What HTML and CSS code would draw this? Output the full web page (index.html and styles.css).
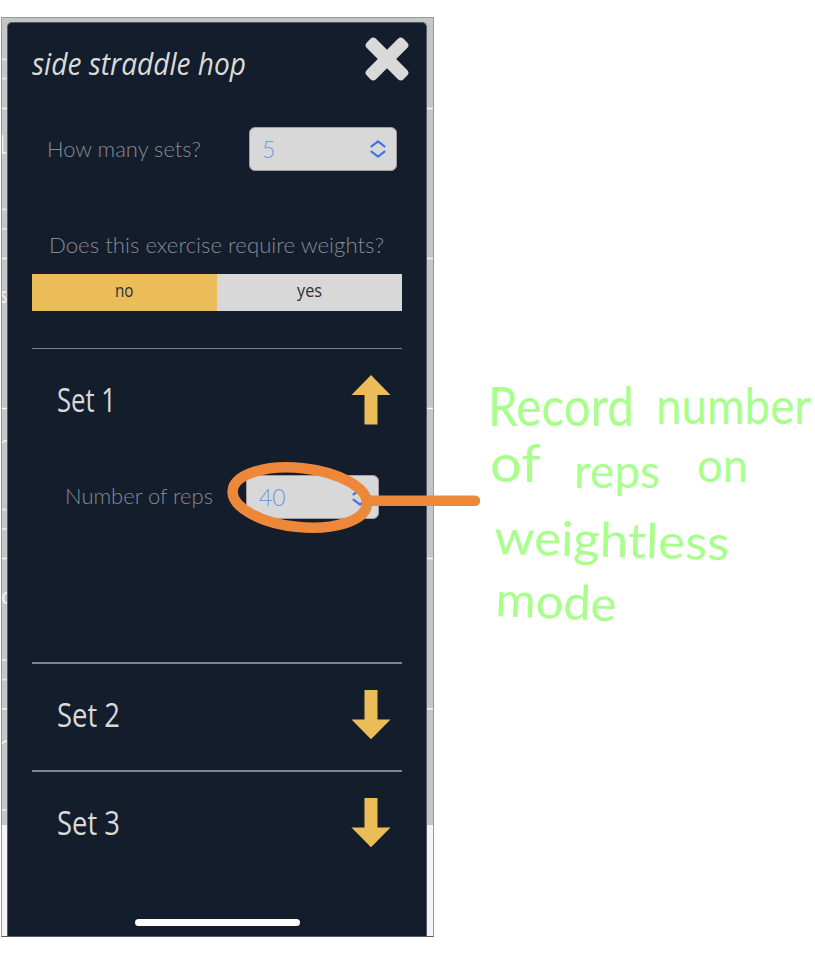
FILE: index.html
```html
<!DOCTYPE html>
<html lang="en">
<head>
<meta charset="utf-8">
<title>side straddle hop</title>
<link rel="stylesheet" href="styles.css">
</head>
<body>
<main class="board">
  <section class="phone">
    <svg class="backdrop" width="433" height="920" viewBox="1 17 433 920" aria-hidden="true">
      <rect x="1" y="825" width="433" height="112" fill="#f4f4f6"/>
      <path class="ticks strong" d="M1 108.5h6M1 258.5h6M1 408.5h6M1 558.5h6M1 709h6M427 108.5h7M427 258.5h7M427 408.5h7M427 558.5h7M427 709h7M2.5 135v18h4M2 443q2-3 5-2M2 744q2-3 5-3"/>
      <path class="ticks" d="M1 59.5h6M1 78.5h6M1 209.5h6M1 229h6M1 509.5h6M1 529h6M1 660h6M1 679.5h6M1 810h6"/>
      <text class="peek" x="1" y="303" textLength="6" lengthAdjust="spacingAndGlyphs">s</text>
      <text class="peek" x="1" y="604">c</text>
    </svg>
    <div class="sheet">
      <header class="head">
        <svg class="title" width="218" height="44"><text x="0" y="30" textLength="214" lengthAdjust="spacingAndGlyphs">side straddle hop</text></svg>
        <svg class="close" width="44" height="44" viewBox="-22 -22 44 44" role="img" aria-label="Close"><rect x="-26" y="-6.5" width="52" height="13" rx="4" transform="rotate(45)"/><rect x="-26" y="-6.5" width="52" height="13" rx="4" transform="rotate(-45)"/></svg>
      </header>
      <div class="field sets">
        <svg class="label" width="156" height="32"><text x="0" y="23.5" textLength="154" lengthAdjust="spacingAndGlyphs">How many sets?</text></svg>
        <div class="select"><span>5</span><svg width="16" height="18" viewBox="0 0 16 18"><path d="M1.5 6.3 8 1.4l6.5 4.9M1.5 11.7 8 16.6l6.5-4.9"/></svg></div>
      </div>
      <div class="question"><svg class="label" width="336" height="32"><text x="0" y="21.5" textLength="335" lengthAdjust="spacingAndGlyphs">Does this exercise require weights?</text></svg></div>
      <div class="toggle">
        <div class="option on"><svg width="19" height="24"><text x="0" y="17" textLength="18.5" lengthAdjust="spacingAndGlyphs">no</text></svg></div>
        <div class="option"><svg width="25" height="24"><text x="0" y="17" textLength="25" lengthAdjust="spacingAndGlyphs">yes</text></svg></div>
      </div>
      <div class="set open">
        <div class="set-head">
          <svg class="name" width="66" height="40"><text x="0" y="31" textLength="59" lengthAdjust="spacingAndGlyphs">Set 1</text></svg>
          <svg class="arrow" width="40" height="50" viewBox="0 0 40 50"><path d="M20 0 39.5 20H26.5V49.5H13.5V20H.5Z"/></svg>
        </div>
        <div class="field reps">
          <svg class="label" width="150" height="32"><text x="0" y="23" textLength="148" lengthAdjust="spacingAndGlyphs">Number of reps</text></svg>
          <div class="select"><span>40</span><svg width="16" height="18" viewBox="0 0 16 18"><path d="M1.5 6.3 8 1.4l6.5 4.9M1.5 11.7 8 16.6l6.5-4.9"/></svg></div>
        </div>
      </div>
      <div class="set">
        <div class="set-head">
          <svg class="name" width="66" height="40"><text x="0" y="31" textLength="63" lengthAdjust="spacingAndGlyphs">Set 2</text></svg>
          <svg class="arrow" width="40" height="50" viewBox="0 0 40 50"><path d="M13.5 0H26.5V29.5H39.5L20 49.3.5 29.5H13.5Z"/></svg>
        </div>
      </div>
      <div class="set">
        <div class="set-head">
          <svg class="name" width="66" height="40"><text x="0" y="31" textLength="63" lengthAdjust="spacingAndGlyphs">Set 3</text></svg>
          <svg class="arrow" width="40" height="50" viewBox="0 0 40 50"><path d="M13.5 0H26.5V29.5H39.5L20 49.3.5 29.5H13.5Z"/></svg>
        </div>
      </div>
      <div class="home"></div>
    </div>
  </section>

  <svg class="markup" width="815" height="957" viewBox="0 0 815 957">
    <g class="callout">
      <ellipse cx="299.8" cy="497.5" rx="67.5" ry="29.5" transform="rotate(6 299.8 497.5)"/>
      <path d="M368 500.8H475"/>
    </g>
    <g class="note">
      <text x="488" y="426" font-size="54" textLength="146" lengthAdjust="spacingAndGlyphs">Record</text>
      <text x="656" y="424" font-size="50" textLength="155" lengthAdjust="spacingAndGlyphs">number</text>
      <text x="490" y="482" font-size="52" textLength="51" lengthAdjust="spacingAndGlyphs">of</text>
      <text x="574" y="488" font-size="46" textLength="86" lengthAdjust="spacingAndGlyphs">reps</text>
      <text x="697" y="482" font-size="46" textLength="51" lengthAdjust="spacingAndGlyphs">on</text>
      <text x="494" y="554" font-size="48" textLength="235" lengthAdjust="spacingAndGlyphs" transform="rotate(1.5 494 554)">weightless</text>
      <text x="495" y="616" font-size="48" textLength="121" lengthAdjust="spacingAndGlyphs" transform="rotate(2.5 495 616)">mode</text>
    </g>
  </svg>
</main>
</body>
</html>
```

FILE: styles.css
```css
* { box-sizing: border-box; }
body { margin: 0; background: #fff; font-family: "Open Sans", sans-serif; }
svg { display: block; overflow: visible; flex: none; }
.board { position: relative; width: 815px; height: 957px; padding: 17px 0 0 1px; overflow: hidden; }

.phone {
  position: relative;
  width: 433px;
  height: 920px;
  padding: 5px 7px 1px 6px;
  background: #c4c5c7;
  overflow: hidden;
}
.phone::after { content: ""; position: absolute; inset: 0; border: 1px solid #98999b; border-bottom-color: #55585e; }
.backdrop { position: absolute; left: 0; top: 0; }
.ticks { fill: none; stroke: #e2e3e4; stroke-width: 2; }
.ticks.strong { stroke: #f6f6f6; stroke-width: 1.3; }
.peek { font-size: 21px; fill: #f6f6f6; }

.sheet {
  position: relative;
  display: flex;
  flex-direction: column;
  width: 420px;
  height: 914px;
  padding: 0 24px;
  background: #141d2c;
  border: 1px solid #555b66;
  border-bottom: 0;
  border-radius: 5px 5px 0 0;
}
.head { display: flex; justify-content: space-between; height: 104.4px; margin-right: -6.5px; padding-top: 14px; }
.title { margin: 7.5px 0 0; }
.title text { font: italic 30.5px "Open Sans", sans-serif; fill: #dadada; }
.close { fill: #d9d9d9; }

.field { display: flex; align-items: center; justify-content: space-between; height: 44px; }
.sets { padding: 0 5px 0 15px; }
.label text { font: 300 21.5px Lato, sans-serif; fill: #858a93; }
.select {
  display: flex;
  align-items: center;
  justify-content: space-between;
  width: 148px;
  height: 44px;
  padding: 0 10.5px 0 12px;
  background: #d8d8d8;
  border: 1px solid #a79ca0;
  border-radius: 6px;
  font: 300 23px Lato, sans-serif;
  color: #6f99df;
}
.select path { fill: none; stroke: #3f73e6; stroke-width: 2.2; stroke-linecap: round; stroke-linejoin: round; }

.question { display: flex; justify-content: center; height: 43px; margin-top: 59.6px; }
.toggle { display: flex; height: 37px; }
.option { display: flex; flex: 1; align-items: center; justify-content: center; background: #d8d8d8; }
.option.on { background: #ebbd59; }
.option text { font: 18px "Open Sans", sans-serif; fill: #2d3036; }

.set { height: 108px; border-top: 2px solid #7a8598; }
.set.open { height: 314px; margin-top: 37.5px; border-top-width: 1px; }
.set-head { display: flex; align-items: center; justify-content: space-between; height: 101px; padding: 0 11px 0 24.5px; }
.name { position: relative; top: 1px; }
.name text { font: 32px "Open Sans", sans-serif; fill: #d9d9d9; }
.arrow { fill: #ebbd59; }
.reps { margin-top: 24.5px; padding: 0 23px 0 33px; }
.reps .select { width: 133px; }

.home { width: 165px; height: 7px; margin: 41px auto 0; border-radius: 4px; background: #fff; }

.markup { position: absolute; left: 0; top: 0; }
.callout { fill: none; stroke: #ed8739; stroke-width: 10.5; stroke-linecap: round; }
.note { font-family: Lato, sans-serif; font-weight: 400; fill: #a8ff8c; }
```
